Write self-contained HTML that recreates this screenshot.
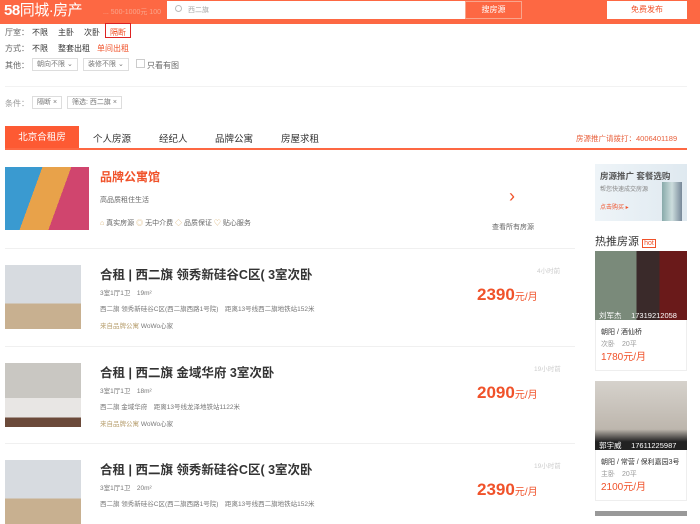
<!DOCTYPE html>
<html><head><meta charset="utf-8"><style>
*{margin:0;padding:0;box-sizing:border-box}
body{width:700px;height:516px;overflow:hidden;background:#fff;font-family:"Liberation Sans","Noto Sans CJK SC",sans-serif;color:#333;position:relative;font-size:8px}
.a{position:absolute;white-space:nowrap}
.hdr{position:absolute;left:0;top:0;width:700px;height:24px;background:#fd6843}
.g{color:#666}.l{color:#999}
.tag{position:absolute;border:1px solid #ddd;height:13px;line-height:11px;padding:0 4px;font-size:7px;color:#777}
.sel{position:absolute;border:1px solid #ddd;height:13px;line-height:11px;padding:0 4px;font-size:7px;color:#777}
.img{position:absolute;left:5px;width:76px;height:64px}
.t{position:absolute;left:100px;font-size:12.5px;font-weight:bold;color:#333}
.p{position:absolute;left:477px;font-size:17px;font-weight:bold;color:#f0522a}
.p span{font-size:10px;font-weight:normal}
.sm{position:absolute;left:100px;font-size:6.5px;color:#777}
.hr{position:absolute;left:5px;width:570px;height:1px;background:#f0f0f0}
</style></head><body>
<div class="hdr"></div>
<div class="a" style="left:4px;top:1px;font-size:15px;line-height:20px;font-weight:bold;color:#fff;letter-spacing:-0.5px">58<span style="font-weight:normal">同城·房产</span></div>
<div class="a" style="left:103px;top:7px;color:#f9a58c;font-size:7px">... 500-1000元 100</div>
<div class="a" style="left:167px;top:1px;width:298px;height:18px;background:#fff"></div>
<div class="a" style="left:175px;top:5px;width:7px;height:7px;border:1px solid #bbb;border-radius:50%"></div>
<div class="a" style="left:188px;top:5px;color:#aaa;font-size:7px">西二旗</div>
<div class="a" style="left:465px;top:1px;width:57px;height:18px;background:#fd6843;border:1px solid #f9a58c;color:#fff;text-align:center;line-height:16px;font-size:8px">搜房源</div>
<div class="a" style="left:607px;top:1px;width:80px;height:18px;background:#fff;color:#f0522a;text-align:center;line-height:18px;font-size:8px">免费发布</div>

<div class="a g" style="left:5px;top:27px">厅室：</div>
<div class="a" style="left:32px;top:27px">不限</div><div class="a" style="left:58px;top:27px">主卧</div><div class="a" style="left:84px;top:27px">次卧</div>
<div class="a" style="left:105px;top:23px;width:26px;height:15px;border:1px solid #d22"></div>
<div class="a" style="left:110px;top:27px;color:#f0522a">隔断</div>
<div class="a g" style="left:5px;top:43px">方式：</div>
<div class="a" style="left:32px;top:43px">不限</div><div class="a" style="left:58px;top:43px">整套出租</div><div class="a" style="left:97px;top:43px;color:#f0522a">单间出租</div>
<div class="a g" style="left:5px;top:60px">其他：</div>
<div class="sel" style="left:32px;top:58px">朝向不限 ⌄</div>
<div class="sel" style="left:83px;top:58px">装修不限 ⌄</div>
<div class="a" style="left:136px;top:59px;width:9px;height:9px;border:1px solid #ccc"></div>
<div class="a g" style="left:147px;top:60px">只看有图</div>
<div class="a" style="left:5px;top:86px;width:682px;height:1px;background:#f2f2f2"></div>
<div class="a l" style="left:5px;top:98px">条件：</div>
<div class="tag" style="left:32px;top:96px">隔断 ×</div>
<div class="tag" style="left:67px;top:96px">筛选: 西二旗 ×</div>

<div class="a" style="left:5px;top:126px;width:74px;height:23px;background:#fd5a33;color:#fff;font-size:9.5px;text-align:center;line-height:23px">北京合租房</div>
<div class="a" style="left:93px;top:131px;font-size:9.5px">个人房源</div>
<div class="a" style="left:159px;top:131px;font-size:9.5px">经纪人</div>
<div class="a" style="left:215px;top:131px;font-size:9.5px">品牌公寓</div>
<div class="a" style="left:281px;top:131px;font-size:9.5px">房屋求租</div>
<div class="a" style="left:576px;top:133px;font-size:7.5px;color:#e8603c">房源推广请拨打：4006401189</div>
<div class="a" style="left:5px;top:148px;width:682px;height:2px;background:#fd6843"></div>

<div class="a" style="left:5px;top:167px;width:84px;height:63px;background:linear-gradient(110deg,#3a9ad0 0 35%,#e8a24a 35% 62%,#d0456e 62%)"></div>
<div class="a" style="left:100px;top:168px;font-size:12px;font-weight:bold;color:#f0522a">品牌公寓馆</div>
<div class="a g" style="left:100px;top:195px;font-size:7px">高品质租住生活</div>
<div class="a g" style="left:100px;top:218px;font-size:7px"><span style="color:#d8b070">⌂</span> 真实房源 <span style="color:#d8b070">◎</span> 无中介费 <span style="color:#d8b070">◇</span> 品质保证 <span style="color:#d8b070">♡</span> 贴心服务</div>
<div class="a" style="left:509px;top:186px;font-size:18px;color:#f0522a">›</div>
<div class="a g" style="left:492px;top:222px;font-size:7px">查看所有房源</div>
<div class="hr" style="top:248px"></div>

<div class="img" style="top:265px;background:linear-gradient(180deg,#d7dbe0 0 60%,#c8b090 60%)"></div>
<div class="t" style="top:264px">合租 | 西二旗 领秀新硅谷C区( 3室次卧</div>
<div class="sm" style="top:287px">3室1厅1卫　19m²</div>
<div class="sm" style="top:303px">西二旗 领秀新硅谷C区(西二旗西路1号院)　距离13号线西二旗地铁站152米</div>
<div class="sm" style="top:320px;color:#b8a070">来自品牌公寓 <span style="color:#777">WoWo心家</span></div>
<div class="a l" style="left:537px;top:265px;font-size:6.5px;color:#ccc">4小时前</div>
<div class="p" style="top:285px">2390<span>元/月</span></div>
<div class="hr" style="top:346px"></div>

<div class="img" style="top:363px;background:linear-gradient(180deg,#c9c7c2 0 55%,#e8e6e4 55% 85%,#6b4a3a 85%)"></div>
<div class="t" style="top:362px">合租 | 西二旗 金域华府 3室次卧</div>
<div class="sm" style="top:385px">3室1厅1卫　18m²</div>
<div class="sm" style="top:401px">西二旗 金域华府　距离13号线龙泽地铁站1122米</div>
<div class="sm" style="top:418px;color:#b8a070">来自品牌公寓 <span style="color:#777">WoWo心家</span></div>
<div class="a" style="left:534px;top:363px;font-size:6.5px;color:#ccc">19小时前</div>
<div class="p" style="top:383px">2090<span>元/月</span></div>
<div class="hr" style="top:443px"></div>

<div class="img" style="top:460px;background:linear-gradient(180deg,#d7dbe0 0 60%,#c8b090 60%)"></div>
<div class="t" style="top:459px">合租 | 西二旗 领秀新硅谷C区( 3室次卧</div>
<div class="sm" style="top:482px">3室1厅1卫　20m²</div>
<div class="sm" style="top:498px">西二旗 领秀新硅谷C区(西二旗西路1号院)　距离13号线西二旗地铁站152米</div>
<div class="a" style="left:534px;top:460px;font-size:6.5px;color:#ccc">19小时前</div>
<div class="p" style="top:480px">2390<span>元/月</span></div>

<div class="a" style="left:595px;top:164px;width:92px;height:57px;background:linear-gradient(90deg,#eef4f8,#dfe9f0)"></div>
<div class="a" style="left:600px;top:170px;font-size:8.5px;font-weight:bold;color:#555">房源推广 套餐选购</div>
<div class="a" style="left:600px;top:184px;font-size:6px;color:#888">帮您快速成交房源</div>
<div class="a" style="left:600px;top:202px;font-size:6px;color:#f0522a">点击购买 ▸</div>
<div class="a" style="left:662px;top:182px;width:20px;height:39px;background:linear-gradient(90deg,#8aa,#cdd,#789)"></div>
<div class="a" style="left:595px;top:233px;font-size:11px;color:#333">热推房源 <span style="font-size:7px;color:#f0522a;border:1px solid #f0522a;padding:0 1px">hot</span></div>

<div class="a" style="left:595px;top:251px;width:92px;height:120px;border:1px solid #eee"></div>
<div class="a" style="left:595px;top:251px;width:92px;height:69px;background:linear-gradient(90deg,#7a8a7a 0 45%,#3a2a2a 45% 70%,#6a1a1a 70%)"></div>
<div class="a" style="left:599px;top:310px;font-size:7.5px;color:#fff">刘军杰　 17319212058</div>
<div class="a" style="left:601px;top:327px;font-size:7px">朝阳 / 酒仙桥</div>
<div class="a l" style="left:601px;top:339px;font-size:7px">次卧　20平</div>
<div class="a" style="left:601px;top:348px;font-size:10px;color:#f0522a">1780元/月</div>

<div class="a" style="left:595px;top:381px;width:92px;height:120px;border:1px solid #eee"></div>
<div class="a" style="left:595px;top:381px;width:92px;height:69px;background:linear-gradient(180deg,#d6d2cc,#bdb6ad 70%,#222 88%)"></div>
<div class="a" style="left:599px;top:440px;font-size:7.5px;color:#fff">郭宇威　 17611225987</div>
<div class="a" style="left:601px;top:457px;font-size:7px">朝阳 / 常营 / 保利嘉园3号</div>
<div class="a l" style="left:601px;top:469px;font-size:7px">主卧　20平</div>
<div class="a" style="left:601px;top:478px;font-size:10px;color:#f0522a">2100元/月</div>
<div class="a" style="left:595px;top:511px;width:92px;height:5px;background:#999"></div>
</body></html>
